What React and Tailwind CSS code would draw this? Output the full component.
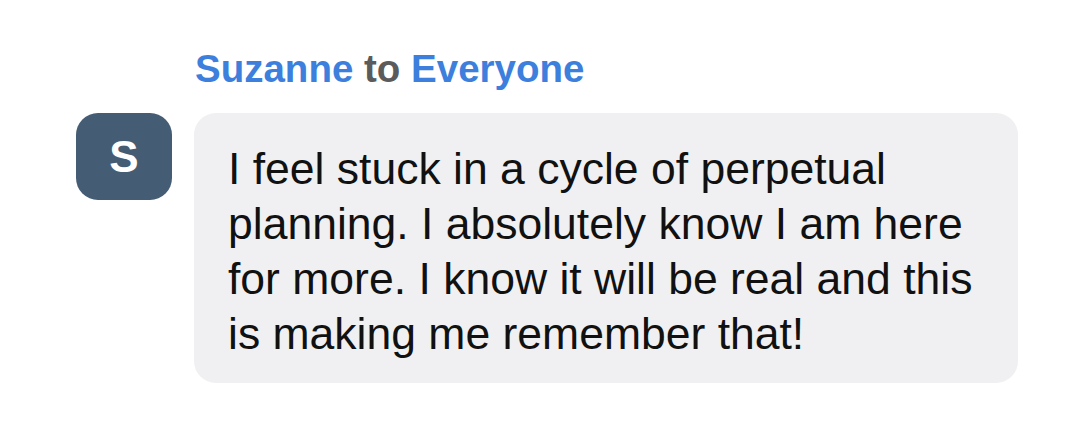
import React from 'react';

export default function App() {
    return (
        <div className="w-[1080px] h-[430px] bg-white font-['Liberation_Sans',Arial,sans-serif]">
            <div className="pt-[47px] pl-[76px] flex flex-col">
                <div className="pl-[119px] text-[38.5px] leading-[44px] font-bold">
                    <span className="text-[#3d7fdc]">Suzanne</span> <span className="text-[#5b5b5b]">to</span> <span className="text-[#3d7fdc]">Everyone</span>
                </div>
                <div className="mt-[22px] flex items-start gap-[22px]">
                    <div className="w-[96px] h-[87px] rounded-[22px] bg-[#445c74] text-white flex items-center justify-center text-[44px] font-bold">S</div>
                    <div className="w-[824px] bg-[#f0f0f2] rounded-[22px] pl-[34px] pr-[26px] pt-[28px] pb-[22px] text-[44.5px] leading-[55px] text-[#111111]">
                        I feel stuck in a cycle of perpetual planning. I absolutely know I am here for more. I know it will be real and this is making me remember that!
                    </div>
                </div>
            </div>
        </div>
    );
}
